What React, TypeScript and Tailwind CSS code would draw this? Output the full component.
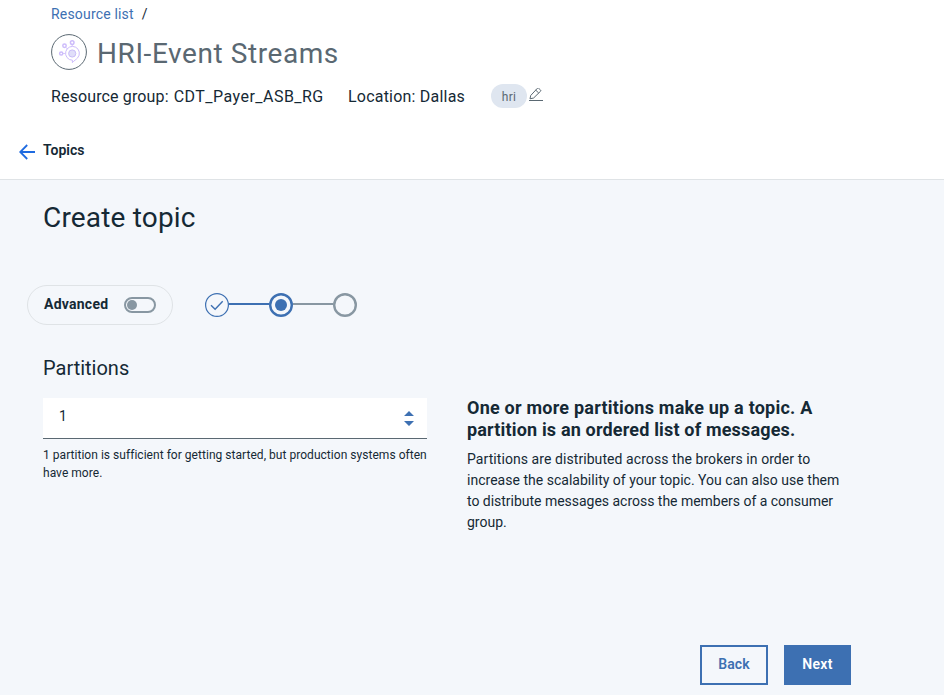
import React from "react";

function StreamsLogo() {
  return (
    <svg className="block h-9 w-9" viewBox="0 0 36 36" fill="none">
      <circle cx="18" cy="18" r="17.4" fill="#fff" stroke="#5a6872" strokeWidth="1" />
      <g stroke="#cdbcfb" strokeWidth="1.5">
        <circle cx="10.2" cy="19.5" r="1.6" />
        <circle cx="13.5" cy="11.8" r="1.7" />
        <circle cx="21.2" cy="8.6" r="1.8" />
        <path d="M12 19.5h2M14.8 13.2l1.7 2M21.2 10.4v1.8" strokeWidth=".8" />
        <path d="M21.4 28.6v-2.4a6.9 6.9 0 1 1 5.2-2.3c-1.5 1.7-3.4 2.6-5.2 4.7Z" strokeWidth="1" />
      </g>
      <circle cx="21.2" cy="19.5" r="3.6" fill="#e0def9" stroke="#c9bdf8" strokeWidth="1" />
    </svg>
  );
}

function Header() {
  return (
    <header className="h-[180px] border-b border-[#dfe3e6] bg-white">
      <div className="flex h-7 items-center gap-2 pl-[51px] text-sm">
        <a className="tracking-[0.18px] text-[#3d70b2]">Resource list</a>
        <span>/</span>
      </div>
      <div className="mt-[6px] flex h-9 items-center gap-[10px] pl-[51px]">
        <StreamsLogo />
        <h1 className="pt-1 text-[28px] leading-9 tracking-[0.58px] text-[#5a6872]">HRI-Event Streams</h1>
      </div>
      <div className="mt-[14px] flex h-6 items-center pl-[51px] text-base">
        <span className="flex w-[297px] gap-[5px] whitespace-nowrap pt-[2px]">
          <span className="tracking-[0.13px]">Resource group:</span>
          <span className="tracking-[0.47px]">CDT_Payer_ASB_RG</span>
        </span>
        <span className="w-[143px] whitespace-nowrap pt-[2px] tracking-[0.21px]">Location: Dallas</span>
        <span className="flex h-6 w-9 items-center justify-center rounded-full bg-[#dfe6f0] pt-px text-xs tracking-[0.3px] text-[#5a6872]">hri</span>
        <svg className="ml-px h-4 w-4" viewBox="0 0 16 16" fill="none" stroke="#5a6872" strokeWidth="1">
          <path d="M1 12.5h14M2 10.8l.7-3.3L9.5.2a.8.8 0 0 1 1.1 0l2 1.9a.8.8 0 0 1 0 1.1L5.6 10l-3.6.8ZM7.7 2.1l3 2.9" />
        </svg>
      </div>
      <div className="mt-[30px] flex h-6 items-center gap-2 pl-[19px]">
        <svg className="mt-[3px] h-4 w-4" viewBox="0 0 16 16" fill="none" stroke="#1f6be0" strokeWidth="1.8">
          <path d="M16 8H1.5M8.2 1 1.2 8l7 7" />
        </svg>
        <span className="text-sm font-semibold">Topics</span>
      </div>
    </header>
  );
}

function Steps() {
  return (
    <div className="flex items-center">
      <svg className="h-6 w-6" viewBox="0 0 24 24" fill="none" stroke="#3d70b2">
        <circle cx="12" cy="12" r="11.4" strokeWidth="1.2" />
        <path d="m6 12.2 4.1 4.1 7.6-8.1" strokeWidth="1.4" />
      </svg>
      <div className="mb-[2px] h-[2px] w-10 bg-[#3d70b2]" />
      <svg className="h-6 w-6" viewBox="0 0 24 24" fill="none">
        <circle cx="12" cy="12" r="10.8" stroke="#3d70b2" strokeWidth="2.4" />
        <circle cx="12" cy="12" r="6" fill="#3d70b2" />
      </svg>
      <div className="mb-[2px] h-[2px] w-10 bg-[#8897a2]" />
      <svg className="h-6 w-6" viewBox="0 0 24 24" fill="none">
        <circle cx="12" cy="12" r="10.8" stroke="#8897a2" strokeWidth="2.4" />
      </svg>
    </div>
  );
}

export default function App() {
  return (
    <div className="flex h-[695px] w-[944px] flex-col overflow-hidden bg-[#f4f7fb] font-['Roboto',sans-serif] text-[#152935]">
      <Header />
      <main className="flex flex-1 flex-col pl-[43px]">
        <h2 className="mt-5 text-[28px] leading-9 tracking-[0.18px]">Create topic</h2>
        <div className="-ml-4 mt-[49px] flex h-10 items-center gap-8">
          <div className="flex h-10 w-[146px] items-center justify-between rounded-full border border-[#dfe3e6] pl-4 pr-4">
            <span className="mb-[2px] text-sm font-bold tracking-[0.25px]">Advanced</span>
            <span className="flex h-4 w-8 items-center rounded-full border-2 border-[#8897a2] pl-px">
              <span className="h-[10px] w-[10px] rounded-full bg-[#8897a2]" />
            </span>
          </div>
          <Steps />
        </div>
        <div className="mt-[29px] flex">
          <section className="w-[424px]">
            <h3 className="text-xl leading-7">Partitions</h3>
            <div className="mt-4 flex h-[41px] w-[384px] items-center justify-between border-b border-[#5a6872] bg-white pl-4 pr-[13px]">
              <span className="mb-1 text-sm">1</span>
              <svg className="h-4 w-[10px]" viewBox="0 0 10 16" fill="#3d70b2">
                <path d="M0 6 5 1l5 5ZM0 11l5 5 5-5Z" />
              </svg>
            </div>
            <p className="mt-[7px] whitespace-nowrap text-xs leading-[18px] tracking-[0.035px]">
              1 partition is sufficient for getting started, but production systems often<br />have more.
            </p>
          </section>
          <section className="whitespace-nowrap pt-[43px]">
            <h4 className="text-lg font-bold leading-[22px]">
              <span className="tracking-[0.22px]">One or more partitions make up a topic. A</span><br />
              <span className="tracking-[0.17px]">partition is an ordered list of messages.</span>
            </h4>
            <p className="mt-2 text-sm leading-[21px]">
              <span className="tracking-[0.07px]">Partitions are distributed across the brokers in order to</span><br />
              <span className="tracking-[0.02px]">increase the scalability of your topic. You can also use them</span><br />
              <span className="tracking-[-0.02px]">to distribute messages across the members of a consumer</span><br />
              group.
            </p>
          </section>
        </div>
        <div className="mb-[10px] mr-[93px] mt-auto flex justify-end gap-4 text-sm font-semibold">
          <button className="h-10 w-[68px] border-2 border-[#3d70b2] pb-[2px] tracking-[0.1px] text-[#3d70b2]">Back</button>
          <button className="h-10 w-[67px] bg-[#3d70b2] pb-[2px] tracking-[0.3px] text-white">Next</button>
        </div>
      </main>
    </div>
  );
}
